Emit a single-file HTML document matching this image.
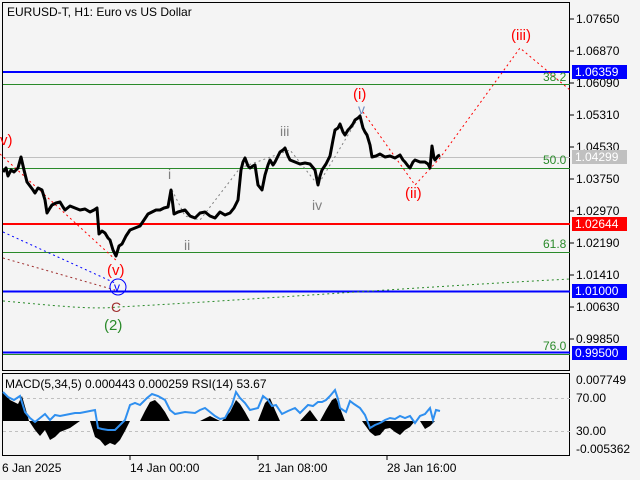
<!DOCTYPE html>
<html><head><meta charset="utf-8"><style>
html,body{margin:0;padding:0;background:#f4f4f4;width:640px;height:480px;overflow:hidden}
svg{display:block;font-family:"Liberation Sans","DejaVu Sans",sans-serif}
</style></head><body>
<svg width="640" height="480" viewBox="0 0 640 480" xmlns="http://www.w3.org/2000/svg">
<rect width="640" height="480" fill="#f4f4f4"/>
<rect x="2.5" y="2.5" width="567" height="368" fill="none" stroke="#000"/>
<rect x="2.5" y="373.5" width="567" height="82" fill="none" stroke="#000"/>
<line x1="3" y1="72" x2="570" y2="72" stroke="#0000ff" stroke-width="2"/>
<line x1="3" y1="84.5" x2="570" y2="84.5" stroke="#2a8a2a"/>
<line x1="3" y1="157.5" x2="570" y2="157.5" stroke="#c0c0c0"/>
<line x1="3" y1="168.5" x2="570" y2="168.5" stroke="#2a8a2a"/>
<line x1="3" y1="224" x2="570" y2="224" stroke="#ff0000" stroke-width="2"/>
<line x1="3" y1="252.5" x2="570" y2="252.5" stroke="#2a8a2a"/>
<line x1="3" y1="291.5" x2="570" y2="291.5" stroke="#0000ff" stroke-width="2"/>
<line x1="3" y1="352.5" x2="570" y2="352.5" stroke="#0000ff" stroke-width="2"/>
<line x1="3" y1="354.5" x2="570" y2="354.5" stroke="#2a8a2a"/>
<g fill="none" stroke-width="1" stroke-dasharray="2,3">
<polyline points="0,154 118,262" stroke="#ff0000"/>
<polyline points="3,232 115,283" stroke="#0000ff"/>
<polyline points="3,258 115,290" stroke="#a03030"/>
<path d="M3,301 C50,305 90,310 118,307 C250,300 400,288 570,279" stroke="#2a8a2a"/>
<polyline points="363,112 415,185 440,158 520,48 570,90" stroke="#ff0000"/>
<polyline points="172,190 185,216 200,220 240,168 290,150 318,185 363,110" stroke="#808080"/>
</g>
<polyline fill="none" stroke="#000" stroke-width="3" stroke-linejoin="round" points="3,172 6,168 8,176 11,170 14,172 18,168 21,157 24,170 27,182 30,186 33,190 35,193 38,188 42,190 45,200 47,213 50,208 52,205 56,203 60,202 63,207 65,210 70,206 75,208 80,210 85,209 90,212 94,210 97,208 99,234 102,231 105,233 108,238 110,240 113,250 116,256 119,246 122,244 126,236 130,230 135,228 140,226 144,220 148,214 152,212 156,210 160,210 164,208 168,207 171,190 174,214 178,212 185,210 190,216 195,218 200,213 205,212 210,216 215,218 220,212 225,215 230,213 234,208 238,200 241,170 243,162 245,158 248,166 250,168 253,166 255,165 258,185 262,190 265,175 268,165 270,160 273,165 275,162 278,156 280,152 283,150 285,148 288,156 290,160 295,162 300,164 305,163 310,164 315,170 318,185 320,176 322,170 326,164 330,156 333,140 335,130 338,128 340,124 343,132 345,135 348,130 350,128 353,124 355,120 358,118 360,116 363,128 365,132 367,135 370,145 372,157 376,156 380,154 385,157 390,156 395,158 400,155 403,160 405,162 408,166 410,168 413,162 415,160 420,162 425,162 428,164 430,168 432,146 434,158 435,160 438,156 440,155"/>
<g stroke="#000"><line x1="570" y1="19" x2="574" y2="19"/><line x1="570" y1="51" x2="574" y2="51"/><line x1="570" y1="83" x2="574" y2="83"/><line x1="570" y1="115" x2="574" y2="115"/><line x1="570" y1="147" x2="574" y2="147"/><line x1="570" y1="179" x2="574" y2="179"/><line x1="570" y1="211" x2="574" y2="211"/><line x1="570" y1="243" x2="574" y2="243"/><line x1="570" y1="275" x2="574" y2="275"/><line x1="570" y1="307" x2="574" y2="307"/><line x1="570" y1="339" x2="574" y2="339"/>
<line x1="130" y1="456" x2="130" y2="460"/><line x1="258" y1="456" x2="258" y2="460"/><line x1="387" y1="456" x2="387" y2="460"/></g>
<g font-size="12" fill="#000">
<text x="576" y="23">1.07650</text><text x="576" y="55">1.06870</text><text x="576" y="87">1.06090</text><text x="576" y="119">1.05310</text><text x="576" y="151">1.04530</text><text x="576" y="183">1.03750</text><text x="576" y="215">1.02970</text><text x="576" y="247">1.02190</text><text x="576" y="279">1.01410</text><text x="576" y="311">1.00630</text><text x="576" y="343">0.99850</text>
<text x="576" y="384">0.007749</text><text x="576" y="402">70.00</text><text x="576" y="435">30.00</text><text x="576" y="453">-0.005362</text>
<text x="2" y="472">6 Jan 2025</text><text x="130" y="472">14 Jan 00:00</text><text x="258" y="472">21 Jan 08:00</text><text x="387" y="472">28 Jan 16:00</text>
<text x="7" y="16">EURUSD-T, H1:  Euro vs US Dollar</text>
<text x="5" y="388">MACD(5,34,5) 0.000443 0.000259 RSI(14) 53.67</text>
</g>
<g font-size="12" fill="#fff">
<rect x="572" y="65" width="55" height="14" fill="#0000ff"/><text x="575" y="76">1.06359</text>
<rect x="572" y="150" width="55" height="14" fill="#c0c0c0"/><text x="575" y="161">1.04299</text>
<rect x="572" y="217" width="55" height="14" fill="#ff0000"/><text x="575" y="228">1.02644</text>
<rect x="572" y="284" width="55" height="14" fill="#0000ff"/><text x="575" y="295">1.01000</text>
<rect x="572" y="346" width="55" height="14" fill="#0000ff"/><text x="575" y="357">0.99500</text>
</g>
<g font-size="12" fill="#2a8a2a">
<text x="543" y="81">38.2</text><text x="543" y="164">50.0</text><text x="543" y="248">61.8</text><text x="543" y="350">76.0</text>
</g>
<g font-size="15" fill="#ff0000">
<text x="511" y="40">(iii)</text><text x="353" y="99">(i)</text><text x="405" y="198">(ii)</text><text x="0" y="145">v)</text><text x="107" y="275">(v)</text>
</g>
<g font-size="14" fill="#808080"><text x="280" y="136">iii</text><text x="312" y="210">iv</text><text x="168" y="179">i</text><text x="184" y="250">ii</text></g>
<text x="358" y="114" font-size="14" fill="#7090c0">v</text>
<circle cx="118" cy="287" r="8" fill="none" stroke="#0000ff"/><text x="114" y="291" font-size="12" fill="#0000ff">v</text>
<text x="111" y="312" font-size="14" fill="#a03030">C</text>
<text x="104" y="330" font-size="15" fill="#2a8a2a">(2)</text>
<line x1="3" y1="398.5" x2="570" y2="398.5" stroke="#c0c0c0" stroke-dasharray="3,3"/>
<line x1="3" y1="431.5" x2="570" y2="431.5" stroke="#c0c0c0" stroke-dasharray="3,3"/>
<path fill="#000" d="M3,421 L3,392 10,400 18,404 22,396 26,410 29,421 Z M29,421 L35,430 40,436 45,430 50,440 55,437 60,432 70,428 80,421 Z M90,421 L95,437 100,440 105,446 110,443 115,445 120,440 125,431 130,421 Z M140,421 L145,411 150,402 155,400 160,405 165,412 170,421 Z M200,421 L210,416 220,421 Z M222,421 L230,412 236,400 240,404 245,412 250,421 Z M258,421 L265,403 270,398 275,410 280,421 Z M300,421 L310,410 318,421 Z M320,421 L326,410 332,400 336,398 340,408 345,421 Z M362,421 L370,432 375,436 380,435 385,429 390,428 395,432 400,435 405,430 410,427 415,421 Z M420,421 L425,429 430,426 435,421 Z"/>
<polyline fill="none" stroke="#2f8fef" stroke-width="2" points="3,392 8,397 14,400 20,396 25,412 30,418 35,422 40,418 45,414 50,420 55,415 60,416 70,414 75,413 80,413 85,412 90,411 95,410 98,428 102,429 108,430 115,430 120,425 125,420 130,405 135,403 140,405 147,398 152,394 158,396 165,400 170,410 175,414 185,412 195,413 200,410 205,408 210,412 215,416 220,419 225,418 232,405 236,392 240,398 245,403 250,410 258,408 263,396 268,400 272,406 276,405 282,414 288,411 295,408 300,413 308,405 313,406 318,402 322,402 326,400 330,396 335,390 338,399 340,408 346,412 350,401 354,404 360,408 365,415 370,428 375,425 380,423 385,420 390,418 395,419 400,416 405,418 410,416 415,423 420,416 425,414 430,408 433,420 436,410 440,411"/>
</svg>
</body></html>
